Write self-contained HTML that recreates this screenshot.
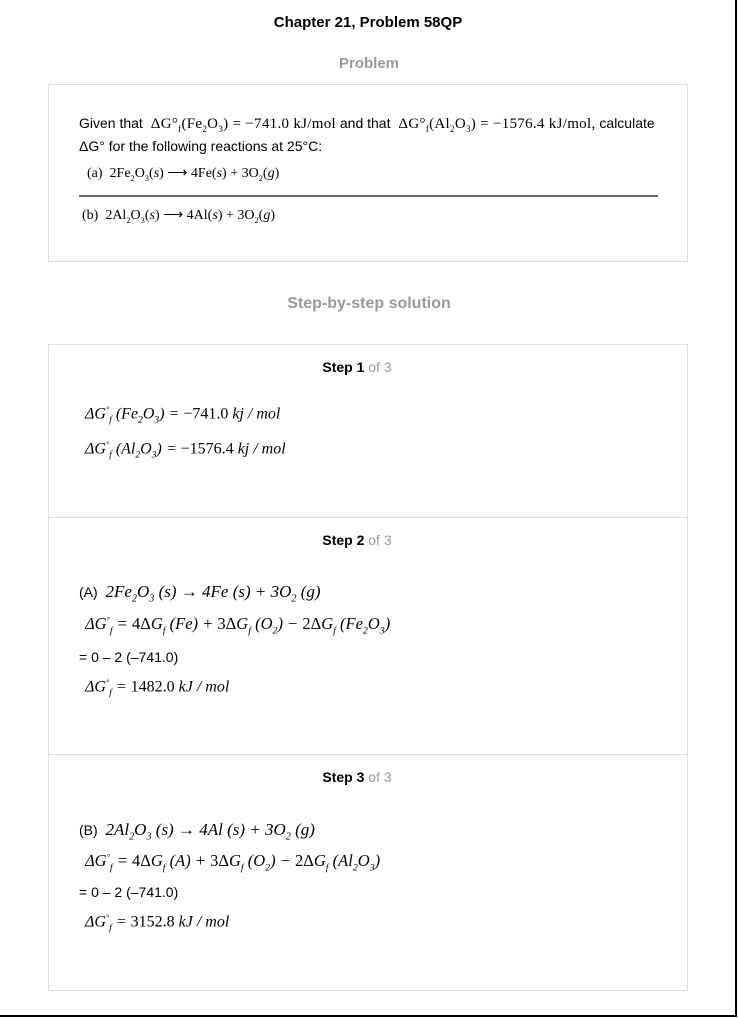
<!DOCTYPE html>
<html><head><meta charset="utf-8"><style>
body{margin:0;width:738px;height:1018px;position:relative;background:#fff;font-family:"Liberation Sans",sans-serif;color:#000;overflow:hidden}
.frame{position:absolute;left:0;top:0;width:735px;height:1015px;border-right:2px solid #000;border-bottom:2px solid #000}
.a{position:absolute;white-space:nowrap}
.box{position:absolute;left:48px;width:640px;border:1px solid #ddd;box-sizing:border-box}
.s{font-family:"Liberation Serif",serif;font-style:italic;font-size:17px}
.r{font-family:"Liberation Serif",serif;font-size:15px}
.t{font-size:14px}
sub{font-size:60%}
.step{font-size:14px;font-weight:bold}.step span{color:#999;font-weight:normal}
</style></head><body>
<div class="frame"></div>
<div class="a" style="left:0;width:736px;text-align:center;top:14px;font-size:15px;font-weight:bold">Chapter 21, Problem 58QP</div>
<div class="a" style="left:0;width:738px;text-align:center;top:55px;font-size:15px;font-weight:bold;color:#999">Problem</div>
<div class="box" style="top:84px;height:178px"></div>
<div class="a t" style="left:79px;top:115px">Given that <span class="r" style="letter-spacing:0.3px">&nbsp;ΔG°<sub>f</sub>(Fe<sub>2</sub>O<sub>3</sub>) = −741.0 kJ/mol</span> and that <span class="r" style="letter-spacing:0.3px">&nbsp;ΔG°<sub>f</sub>(Al<sub>2</sub>O<sub>3</sub>) = −1576.4 kJ/mol,</span> calculate</div>
<div class="a t" style="left:79px;top:138px">ΔG° for the following reactions at 25°C:</div>
<div class="a r" style="left:87px;top:165px;font-size:14px">(a)&nbsp; 2Fe<sub>2</sub>O<sub>3</sub>(<i>s</i>) ⟶ 4Fe(<i>s</i>) + 3O<sub>2</sub>(<i>g</i>)</div>
<div class="a" style="left:79px;top:195px;width:579px;height:2px;background:#666"></div>
<div class="a r" style="left:82px;top:207px;font-size:14px">(b)&nbsp; 2Al<sub>2</sub>O<sub>3</sub>(<i>s</i>) ⟶ 4Al(<i>s</i>) + 3O<sub>2</sub>(<i>g</i>)</div>
<div class="a" style="left:0;width:738px;text-align:center;top:295px;font-size:16px;font-weight:bold;color:#999">Step-by-step solution</div>
<div class="box" style="top:344px;height:647px"></div>
<div class="a" style="left:49px;top:517px;width:638px;height:1px;background:#ddd"></div>
<div class="a" style="left:49px;top:754px;width:638px;height:1px;background:#ddd"></div>
<div class="a step" style="left:0;width:714px;text-align:center;top:359px">Step 1 <span>of 3</span></div>
<div class="a s" style="left:85px;top:405px;font-size:16px">ΔG<sup style="font-size:8px">°</sup><sub>f</sub> (Fe<sub>2</sub>O<sub>3</sub>) = <span style="font-style:normal">−741.0</span> kj / mol</div>
<div class="a s" style="left:85px;top:440px;font-size:16px">ΔG<sup style="font-size:8px">°</sup><sub>f</sub> (Al<sub>2</sub>O<sub>3</sub>) = <span style="font-style:normal">−1576.4</span> kj / mol</div>
<div class="a step" style="left:0;width:714px;text-align:center;top:532px">Step 2 <span>of 3</span></div>
<div class="a t" style="left:79px;top:582px">(A)&nbsp; <span class="s">2Fe<sub>2</sub>O<sub>3</sub> (s) → 4Fe (s) + 3O<sub>2</sub> (g)</span></div>
<div class="a s" style="left:85px;top:614px;font-size:16.5px">ΔG<sup style="font-size:8px">°</sup><sub>f</sub> = <span style="font-style:normal">4Δ</span>G<sub>f</sub> (Fe) + <span style="font-style:normal">3Δ</span>G<sub>f</sub> (O<sub>2</sub>) − <span style="font-style:normal">2Δ</span>G<sub>f</sub> (Fe<sub>2</sub>O<sub>3</sub>)</div>
<div class="a t" style="left:79px;top:649px">= 0 – 2 (–741.0)</div>
<div class="a s" style="left:85px;top:678px;font-size:16px">ΔG<sup style="font-size:8px">°</sup><sub>f</sub> = <span style="font-style:normal">1482.0</span> kJ / mol</div>
<div class="a step" style="left:0;width:714px;text-align:center;top:769px">Step 3 <span>of 3</span></div>
<div class="a t" style="left:79px;top:820px">(B)&nbsp; <span class="s">2Al<sub>2</sub>O<sub>3</sub> (s) → 4Al (s) + 3O<sub>2</sub> (g)</span></div>
<div class="a s" style="left:85px;top:851px;font-size:16.5px">ΔG<sup style="font-size:8px">°</sup><sub>f</sub> = <span style="font-style:normal">4Δ</span>G<sub>f</sub> (A) + <span style="font-style:normal">3Δ</span>G<sub>f</sub> (O<sub>2</sub>) − <span style="font-style:normal">2Δ</span>G<sub>f</sub> (Al<sub>2</sub>O<sub>3</sub>)</div>
<div class="a t" style="left:79px;top:884px">= 0 – 2 (–741.0)</div>
<div class="a s" style="left:85px;top:913px;font-size:16px">ΔG<sup style="font-size:8px">°</sup><sub>f</sub> = <span style="font-style:normal">3152.8</span> kJ / mol</div>
</body></html>
